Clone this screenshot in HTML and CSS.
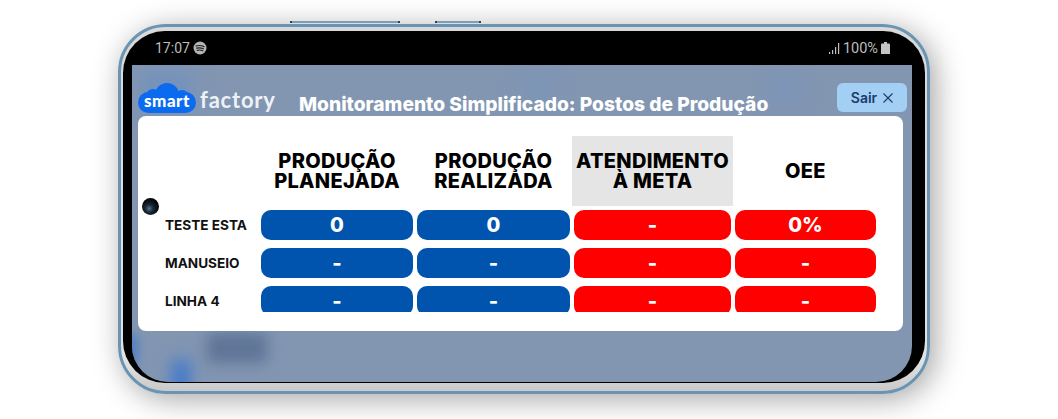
FILE: index.html
```html
<!DOCTYPE html>
<html lang="en">
<head>
    <meta charset="UTF-8">
    <meta name="viewport" content="width=device-width, initial-scale=1.0">
    <title>Smart Factory</title>
    <link rel="stylesheet" href="styles.css">
</head>
<body>
    <div class="phone">
        <span class="side-key key-long"></span>
        <span class="side-key key-short"></span>
        <div class="bezel">
            <div class="status-bar">
                <div class="status-left">
                    <span>17:07</span>
                    <svg class="spotify" viewBox="0 0 14 14" width="14" height="14">
                        <circle cx="7" cy="7" r="6.5" fill="#b5b5b5"/>
                        <path d="M3 5 Q7 3.8 11 5.6M3.6 7.2 Q7 6.2 10.4 7.8M4.2 9.3 Q7 8.5 9.8 9.8" fill="none" stroke="#222" stroke-width="1.2" stroke-linecap="round"/>
                    </svg>
                </div>
                <div class="status-right">
                    <svg viewBox="0 0 11 11" width="11" height="11">
                        <path d="M0 9h1.2v2H0zM3 7h1.2v4H3zM6 4h1.2v7H6zM9 0h1.2v11H9z" fill="#c0c0c0"/>
                    </svg>
                    <span class="battery-level">100%</span>
                    <svg viewBox="0 0 9 12" width="9" height="12">
                        <path d="M3 0h3v1.5h2a1 1 0 0 1 1 1V12H0V2.500a1 1 0 0 1 1-1h2z" fill="#c4c4c4"/>
                    </svg>
                </div>
            </div>

            <div class="screen">
                <span class="blot blot-logo"></span>
                <span class="blot blot-top"></span>
                <span class="blot blot-mid"></span>
                <span class="blot blot-dark"></span>
                <span class="blot blot-blue"></span>
                <span class="blot blot-edge"></span>

                <header class="app-header">
                    <div class="logo">
                        <div class="cloud">
                            <svg viewBox="0 0 58 30" width="58" height="30">
                                <g fill="#0a6bf0">
                                    <rect x="0" y="9" width="58" height="21" rx="10.500"/>
                                    <circle cx="29" cy="12" r="12"/>
                                    <circle cx="15" cy="13" r="7"/>
                                    <circle cx="44" cy="14" r="7"/>
                                </g>
                            </svg>
                            <span class="cloud-text">smart</span>
                        </div>
                        <span class="logo-text">factory</span>
                    </div>
                    <h1 class="title">Monitoramento Simplificado: Postos de Produção</h1>
                    <button class="logout" type="button">
                        Sair
                        <svg viewBox="0 0 10 10" width="10" height="10">
                            <path d="M.5.5l9 9M9.500.5l-9 9" stroke="#1b3a6b" stroke-width="1.100" fill="none"/>
                        </svg>
                    </button>
                </header>

                <main class="card">
                    <span class="camera"></span>
                    <div class="board">
                        <div></div>
                        <div class="col-title">PRODUÇÃO<br>PLANEJADA</div>
                        <div class="col-title">PRODUÇÃO<br>REALIZADA</div>
                        <div class="col-title col-active">ATENDIMENTO<br>À META</div>
                        <div class="col-title">OEE</div>

                        <div class="row-name">TESTE ESTA</div>
                        <div class="pill pill-blue">0</div>
                        <div class="pill pill-blue">0</div>
                        <div class="pill pill-red">-</div>
                        <div class="pill pill-red">0%</div>

                        <div class="row-name">MANUSEIO</div>
                        <div class="pill pill-blue">-</div>
                        <div class="pill pill-blue">-</div>
                        <div class="pill pill-red">-</div>
                        <div class="pill pill-red">-</div>

                        <div class="row-name">LINHA 4</div>
                        <div class="pill pill-blue">-</div>
                        <div class="pill pill-blue">-</div>
                        <div class="pill pill-red">-</div>
                        <div class="pill pill-red">-</div>
                    </div>
                </main>
            </div>
        </div>
    </div>
</body>
</html>
```

FILE: styles.css
```css
html, body {
    margin: 0;
    padding: 0;
    height: 419px;
    overflow: hidden;
    background-color: #fff;
}

body {
    font-family: 'Inter', 'Liberation Sans', sans-serif;
    padding-top: 24px;
    padding-left: 118px;
    box-sizing: border-box;
}

.phone {
    position: relative;
    width: 812px;
    height: 370px;
    box-sizing: border-box;
    padding: 4px 2px 8px 2px;
    border: 3px solid #6a94b3;
    border-radius: 48px;
    background: linear-gradient(#d9d9d9, #e2e2e2 92%, #c9c9c9);
    box-shadow: 5px 5px 30px rgba(0, 0, 0, 0.36);
}

.side-key {
    position: absolute;
    top: -6px;
    height: 2px;
    background-color: #7b9fba;
    border-left: 2px solid #2c4258;
    border-right: 2px solid #2c4258;
}

.key-long {
    left: 169px;
    width: 106px;
}

.key-short {
    left: 314px;
    width: 42px;
}

.bezel {
    height: 352px;
    background-color: #000;
    border-radius: 42px;
    overflow: hidden;
}

.status-bar {
    height: 34px;
    display: flex;
    justify-content: space-between;
    align-items: center;
    padding: 0 35px 0 32px;
    font-family: 'Roboto', sans-serif;
    font-size: 14px;
    color: #bdbdbd;
}

.status-left,
.status-right {
    display: flex;
    align-items: center;
    gap: 3px;
}

.battery-level {
    font-size: 14.5px;
}

.screen {
    position: relative;
    height: 317px;
    margin: 0 13px 0 9px;
    overflow: hidden;
    background-color: #8296b2;
    border-radius: 0 0 36px 36px;
}

.blot {
    position: absolute;
    filter: blur(9px);
}

.blot-logo {
    left: 10px;
    top: 5px;
    width: 50px;
    height: 40px;
    background-color: #7492bd;
}

.blot-top {
    left: 640px;
    top: 12px;
    width: 26px;
    height: 26px;
    background-color: #7b95ba;
}

.blot-mid {
    left: 390px;
    top: 12px;
    width: 30px;
    height: 24px;
    background-color: #7c95b8;
}

.blot-dark {
    left: 75px;
    top: 268px;
    width: 60px;
    height: 30px;
    filter: blur(7px);
    background-color: #5f7597;
}

.blot-blue {
    left: 40px;
    top: 295px;
    width: 18px;
    height: 36px;
    filter: blur(8px);
    background-color: #3f78cc;
}

.blot-edge {
    left: -8px;
    top: 270px;
    width: 14px;
    height: 30px;
    filter: blur(5px);
    background-color: #4f80c4;
}

.app-header {
    position: relative;
    height: 51px;
    display: flex;
    align-items: flex-end;
    padding: 0 5px 0 6px;
    overflow: hidden;
}

.logo {
    display: flex;
    align-items: flex-end;
    gap: 4px;
    width: 161px;
    margin-bottom: 3px;
}

.cloud {
    position: relative;
    width: 58px;
    height: 30px;
}

.cloud-text {
    position: absolute;
    left: 0;
    right: 0;
    bottom: 2px;
    text-align: center;
    font-family: 'Lato', sans-serif;
    font-weight: 900;
    font-size: 17px;
    line-height: 20px;
    letter-spacing: 0.5px;
    color: #fff;
}

.logo-text {
    font-family: 'Lato', sans-serif;
    font-size: 22px;
    font-weight: 700;
    line-height: 26px;
    letter-spacing: 0.8px;
    color: #eef2f7;
}

.title {
    margin: 0;
    font-size: 19.2px;
    line-height: 24px;
    font-weight: 800;
    color: #fff;
    white-space: nowrap;
}

.logout {
    display: flex;
    align-items: center;
    justify-content: center;
    gap: 6px;
    width: 70px;
    height: 29px;
    margin: 0 0 4px auto;
    padding: 0;
    border: none;
    border-radius: 6px;
    background-color: #a3cff5;
    font-family: 'Inter', sans-serif;
    font-size: 14px;
    font-weight: 600;
    color: #1b3a6b;
    cursor: pointer;
}

.card {
    position: relative;
    height: 195px;
    margin: 0 9px 0 6px;
    padding-top: 20px;
    background-color: #fff;
    border-radius: 8px;
}

.camera {
    position: absolute;
    left: 4px;
    top: 82px;
    width: 17px;
    height: 17px;
    border-radius: 50%;
    background: radial-gradient(circle at 42% 62%, #4f7396 0, #1a2735 28%, #07080c 60%);
}

.board {
    display: grid;
    grid-template-columns: 121px 156px 157px 161px 145px;
    grid-template-rows: 70px repeat(3, 38px);
    height: 176px;
    width: 740px;
    overflow: hidden;
}

.col-title {
    display: flex;
    align-items: center;
    justify-content: center;
    text-align: center;
    font-size: 20px;
    line-height: 20px;
    font-weight: 800;
    letter-spacing: 0.3px;
    color: #000;
}

.col-active {
    background-color: #e5e5e5;
}

.row-name {
    display: flex;
    align-items: center;
    padding-left: 27px;
    font-size: 13.6px;
    font-weight: 700;
    color: #111;
    white-space: nowrap;
}

.pill {
    display: flex;
    align-items: center;
    justify-content: center;
    height: 29px;
    padding-bottom: 1px;
    margin: 4px 2px;
    border-radius: 10px;
    font-size: 20px;
    font-weight: 800;
    color: #fff;
}

.pill-blue {
    background-color: #0054ae;
}

.pill-red {
    background-color: #ff0000;
}
```
